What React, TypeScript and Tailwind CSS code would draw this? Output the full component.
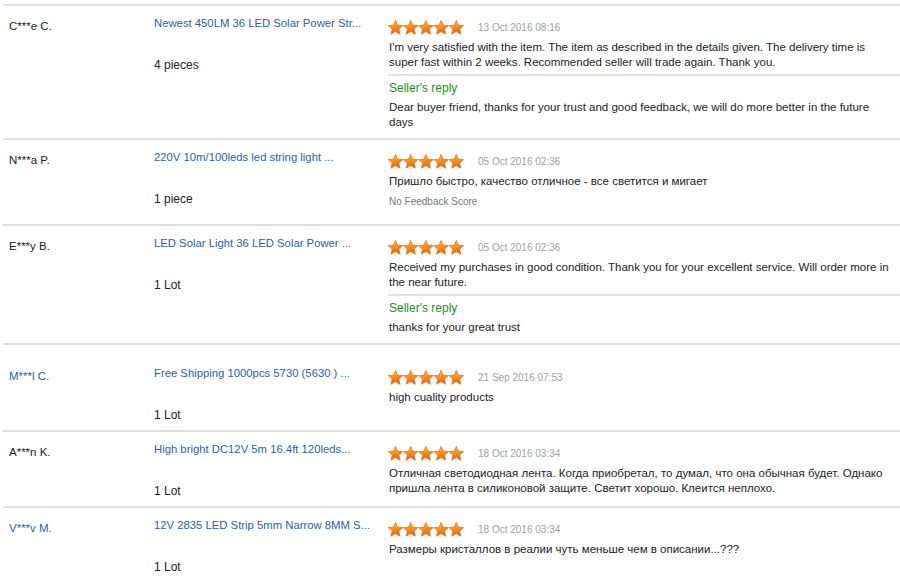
import React from "react";

type Feedback = {
  buyer: string;
  buyerLink?: boolean;
  product: string;
  qty: string;
  date: string;
  text: string;
  reply?: string;
  noScore?: boolean;
  spaced?: boolean;
};

const feedbacks: Feedback[] = [
  {
    buyer: "C***e C.",
    product: "Newest 450LM 36 LED Solar Power Str...",
    qty: "4 pieces",
    date: "13 Oct 2016 08:16",
    text: "I'm very satisfied with the item. The item as described in the details given. The delivery time is super fast within 2 weeks. Recommended seller will trade again. Thank you.",
    reply:
      "Dear buyer friend, thanks for your trust and good feedback, we will do more better in the future days",
  },
  {
    buyer: "N***a P.",
    product: "220V 10m/100leds led string light ...",
    qty: "1 piece",
    date: "05 Oct 2016 02:36",
    text: "Пришло быстро, качество отличное - все светится и мигает",
    noScore: true,
  },
  {
    buyer: "E***y B.",
    product: "LED Solar Light 36 LED Solar Power ...",
    qty: "1 Lot",
    date: "05 Oct 2016 02:36",
    text: "Received my purchases in good condition. Thank you for your excellent service. Will order more in the near future.",
    reply: "thanks for your great trust",
  },
  {
    buyer: "M***l C.",
    buyerLink: true,
    product: "Free Shipping 1000pcs 5730 (5630 ) ...",
    qty: "1 Lot",
    date: "21 Sep 2016 07:53",
    text: "high cuality products",
    spaced: true,
  },
  {
    buyer: "A***n K.",
    product: "High bright DC12V 5m 16.4ft 120leds...",
    qty: "1 Lot",
    date: "18 Oct 2016 03:34",
    text: "Отличная светодиодная лента. Когда приобретал, то думал, что она обычная будет. Однако пришла лента в силиконовой защите. Светит хорошо. Клеится неплохо.",
  },
  {
    buyer: "V***v M.",
    buyerLink: true,
    product: "12V 2835 LED Strip 5mm Narrow 8MM S...",
    qty: "1 Lot",
    date: "18 Oct 2016 03:34",
    text: "Размеры кристаллов в реалии чуть меньше чем в описании...???",
  },
];

const STAR =
  "M7.5 0.3 L9.6 5.1 L14.9 5.6 L10.9 9.1 L12.1 14.3 L7.5 11.6 L2.9 14.3 L4.1 9.1 L0.1 5.6 L5.4 5.1 Z";

function Stars() {
  return (
    <svg width="76" height="15" viewBox="0 0 76 15" className="block">
      <defs>
        <linearGradient id="starFill" x1="0" y1="0" x2="0.3" y2="1">
          <stop offset="0%" stopColor="#ffc64a" />
          <stop offset="55%" stopColor="#f8911c" />
          <stop offset="100%" stopColor="#ec5f0b" />
        </linearGradient>
      </defs>
      {[0, 1, 2, 3, 4].map((i) => (
        <path
          key={i}
          d={STAR}
          transform={`translate(${i * 15.2} 0)`}
          fill="url(#starFill)"
          stroke="#e0660e"
          strokeWidth="0.6"
          strokeLinejoin="round"
        />
      ))}
    </svg>
  );
}

function Row({ f }: { f: Feedback }) {
  return (
    <div
      className={`flex border-t-2 border-[#dedede] pb-[7px] ${f.spaced ? "pt-[21px]" : "pt-[10px]"}`}
    >
      <div
        className={`w-[151px] shrink-0 pl-[6px] pt-[3px] text-[11.5px] leading-[15px] ${f.buyerLink ? "text-[#2a62a8]" : "text-[#222]"}`}
      >
        {f.buyer}
      </div>
      <div className="w-[234px] shrink-0">
        <div className="text-[11.3px] leading-[15px] text-[#2a62a8]">{f.product}</div>
        <div className="mt-[27px] text-[12px] leading-[15px] text-[#222]">{f.qty}</div>
      </div>
      <div className="flex-1 pb-[1px]">
        <div className="mt-[4px] flex h-[14px] items-center gap-[14px]">
          <Stars />
          <span className="text-[10px] text-[#a0a0a0]">{f.date}</span>
        </div>
        <p className="mt-[6px] w-[505px] pl-[1px] text-[11.5px] leading-[15px] text-[#222]">
          {f.text}
        </p>
        {f.noScore && (
          <p className="mb-[7px] mt-[5px] pl-[1px] text-[10px] leading-[15px] text-[#777]">
            No Feedback Score
          </p>
        )}
        {f.reply && (
          <>
            <div className="mt-[4px] h-[2px] bg-[#e2e2e2]" />
            <div className="mt-[5px] pl-[1px] text-[12px] leading-[15px] text-[#1f8f1f]">
              Seller's reply
            </div>
            <p className="mt-[4px] w-[505px] pl-[1px] text-[11.5px] leading-[15px] text-[#222]">
              {f.reply}
            </p>
          </>
        )}
      </div>
    </div>
  );
}

export default function App() {
  return (
    <div className="h-[584px] w-[900px] overflow-hidden bg-white pl-[3px] pt-[4px] font-['Liberation_Sans',Arial,sans-serif]">
      {feedbacks.map((f, i) => (
        <Row key={i} f={f} />
      ))}
    </div>
  );
}
